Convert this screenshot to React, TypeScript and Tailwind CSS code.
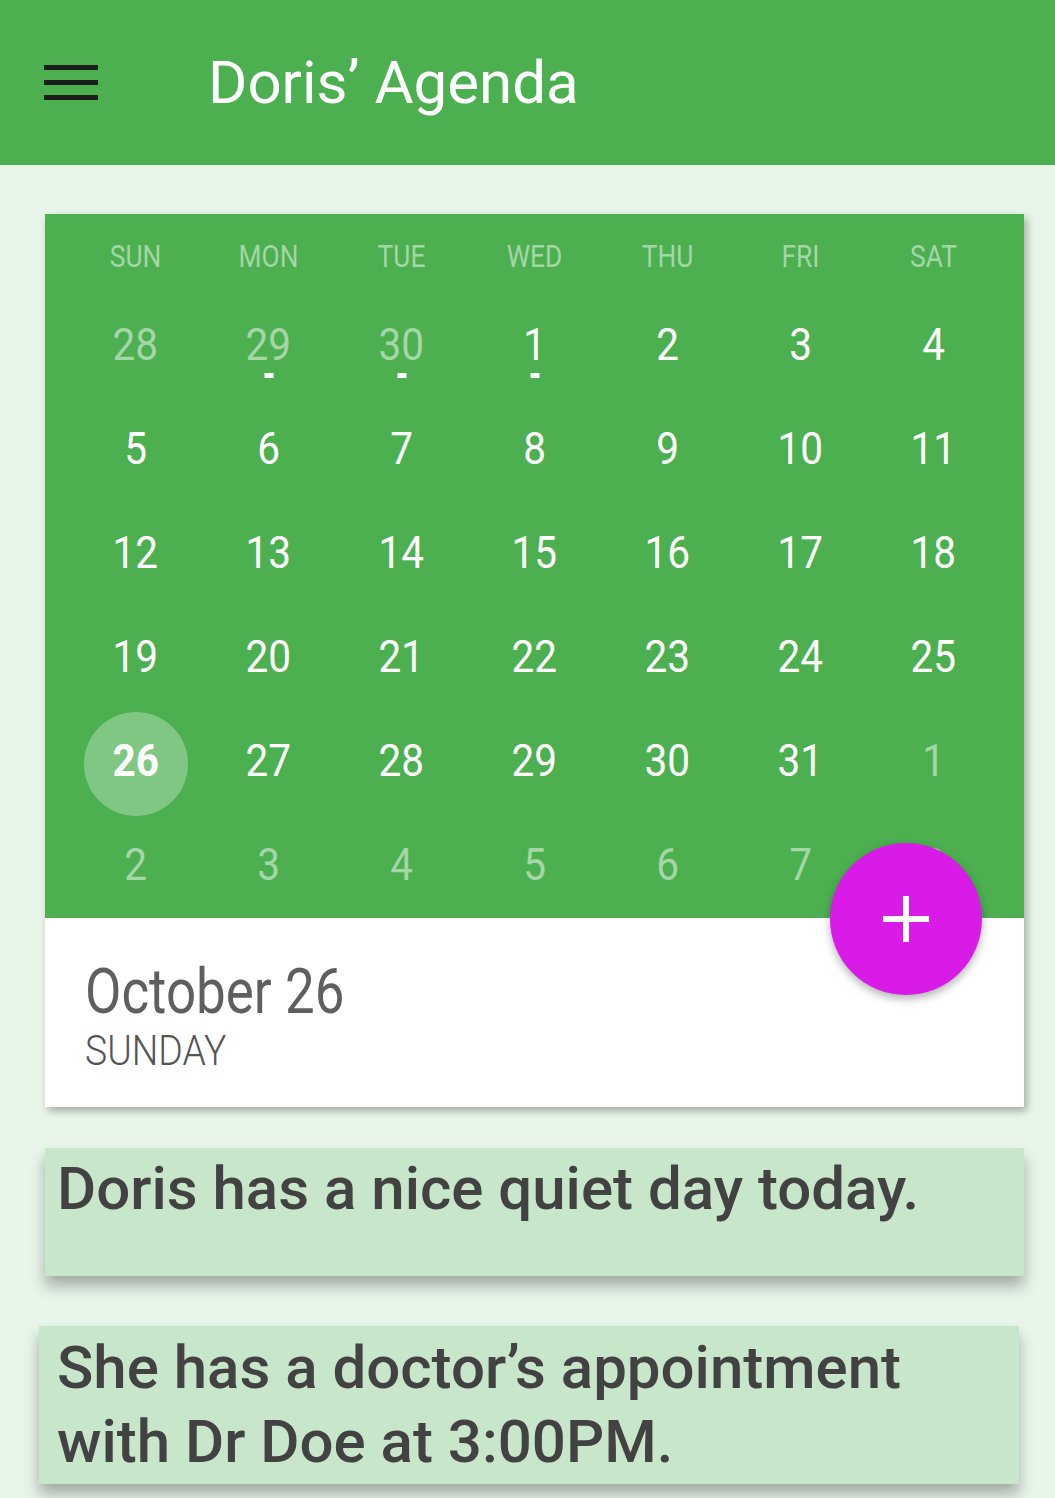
import { Fragment } from "react";

type Day = { n: number; faded?: boolean; dot?: boolean; selected?: boolean };

const weekdays = ["SUN", "MON", "TUE", "WED", "THU", "FRI", "SAT"];

const weeks: Day[][] = [
  [
    { n: 28, faded: true },
    { n: 29, faded: true, dot: true },
    { n: 30, faded: true, dot: true },
    { n: 1, dot: true },
    { n: 2 },
    { n: 3 },
    { n: 4 },
  ],
  [5, 6, 7, 8, 9, 10, 11].map((n) => ({ n })),
  [12, 13, 14, 15, 16, 17, 18].map((n) => ({ n })),
  [19, 20, 21, 22, 23, 24, 25].map((n) => ({ n })),
  [
    { n: 26, selected: true },
    { n: 27 },
    { n: 28 },
    { n: 29 },
    { n: 30 },
    { n: 31 },
    { n: 1, faded: true },
  ],
  [2, 3, 4, 5, 6, 7, 8].map((n) => ({ n, faded: true })),
];

const events = [
  { text: "Doris has a nice quiet day today.", box: "ml-[45px] mr-[31px] h-[128px] pl-[12px] pt-[4px]" },
  {
    text: "She has a doctor’s appointment with Dr Doe at 3:00PM.",
    box: "ml-[39px] mr-[36px] mt-[50px] pl-[18px] pt-[5px] pb-[5px] pr-[80px]",
  },
];

const DayCell = ({ day }: { day: Day }) => (
  <div className="relative h-[104px] flex items-center justify-center">
    {day.selected && (
      <span className="absolute left-1/2 top-1/2 w-[104px] h-[104px] -translate-x-1/2 -translate-y-[48px] rounded-full bg-[#81c784]" />
    )}
    <span
      className={
        "relative text-[45px] leading-none scale-x-[0.9] " +
        (day.selected ? "font-bold text-white" : day.faded ? "text-[#a5d6a7]" : "text-white")
      }
    >
      {day.n}
    </span>
    {day.dot && <span className="absolute left-1/2 top-[81px] -translate-x-1/2 w-[9px] h-[5px] bg-white" />}
  </div>
);

export default function App() {
  return (
    <div className="min-h-[1498px] bg-[#e8f5e9] font-['Roboto',sans-serif] overflow-hidden">
      <header className="h-[165px] bg-[#4caf50] flex items-center">
        <button className="ml-[44px] w-[54px] flex flex-col gap-[10px]" aria-label="menu">
          <span className="block h-[5px] bg-[#1b1f1b]" />
          <span className="block h-[5px] bg-[#1b1f1b]" />
          <span className="block h-[5px] bg-[#1b1f1b]" />
        </button>
        <h1 className="ml-[110px] text-[60px] text-white leading-none">Doris’ Agenda</h1>
      </header>

      <section className="relative mt-[49px] ml-[45px] mr-[31px] bg-white shadow-[3px_4px_8px_rgba(0,0,0,0.3)]">
        <div className="bg-[#4caf50] pt-[8px] pb-[2px] px-[24px]">
          <div className="grid grid-cols-7 h-[70px] items-center">
            {weekdays.map((w) => (
              <span key={w} className="text-center text-[31px] text-[#a5d6a7] scale-x-[0.85]">
                {w}
              </span>
            ))}
          </div>
          <div className="grid grid-cols-7">
            {weeks.map((week, i) => (
              <Fragment key={i}>
                {week.map((d, j) => (
                  <DayCell key={j} day={d} />
                ))}
              </Fragment>
            ))}
          </div>
        </div>
        <div className="h-[189px] pl-[40px] pt-[38px] text-[#5f5f5f]">
          <div className="text-[63px] leading-[72px] origin-left scale-x-[0.84]">October 26</div>
          <div className="text-[42px] leading-[46px] font-light text-[#555] origin-left scale-x-[0.89]">SUNDAY</div>
        </div>
        <button
          aria-label="add"
          className="absolute right-[42px] top-[629px] w-[152px] h-[152px] rounded-full bg-[#d81be6] shadow-[0_4px_8px_rgba(0,0,0,0.3)] flex items-center justify-center"
        >
          <svg width="48" height="48" viewBox="0 0 48 48">
            <path d="M24 1v46M1 24h46" stroke="white" strokeWidth="6" />
          </svg>
        </button>
      </section>

      <div className="mt-[41px]">
        {events.map((e) => (
          <div
            key={e.text}
            className={"bg-[#c8e6c9] text-[#424242] text-[60px] leading-[74px] font-medium shadow-[0_10px_14px_rgba(0,0,0,0.3)] " + e.box}
          >
            {e.text}
          </div>
        ))}
      </div>
    </div>
  );
}
